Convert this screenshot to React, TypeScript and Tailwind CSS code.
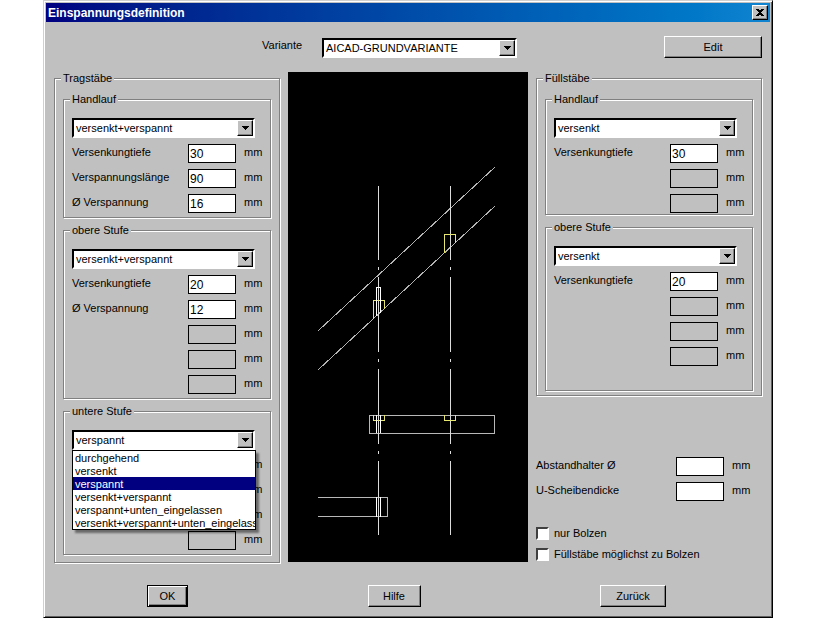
import { useId, useState, type ReactNode } from "react";
import clsx from "clsx";

const mountingOptions = [
  "durchgehend",
  "versenkt",
  "verspannt",
  "versenkt+verspannt",
  "verspannt+unten_eingelassen",
  "versenkt+verspannt+unten_eingelassen",
];

type FieldRow = {
  label?: string;
  value?: string;
};

function Group({ title, className, children }: { title: string; className?: string; children: ReactNode }) {
  return (
    <fieldset
      className={clsx(
        "min-w-0 border border-[#808080] shadow-[1px_1px_0_#fff,inset_1px_1px_0_#fff]",
        className,
      )}
    >
      <legend className="-ml-0.5 bg-[#c0c0c0] px-0.5 leading-[13px]">{title}</legend>
      {children}
    </fieldset>
  );
}

function ComboBox({
  id,
  label,
  value,
  options,
  onChange,
}: {
  id?: string;
  label?: string;
  value: string;
  options: string[];
  onChange: (value: string) => void;
}) {
  return (
    <div className="relative h-5 border-2 border-t-black border-l-black border-r-white border-b-white bg-white">
      <select
        id={id}
        aria-label={label}
        value={value}
        onChange={(event) => onChange(event.target.value)}
        className="block h-4 w-full appearance-none bg-white pl-0.5 pr-4 leading-4 outline-none"
      >
        {options.map((option) => (
          <option key={option}>{option}</option>
        ))}
      </select>
      <span className="pointer-events-none absolute top-0 right-0 flex h-4 w-4 items-center justify-center border border-t-white border-l-white border-r-black border-b-black bg-[#c0c0c0] shadow-[inset_-1px_-1px_0_#808080]">
        <svg width="7" height="4" viewBox="0 0 7 4" shapeRendering="crispEdges" aria-hidden="true">
          <path d="M0 0h7v1H6v1H5v1H4v1H3V3H2V2H1V1H0z" fill="#000" />
        </svg>
      </span>
    </div>
  );
}

function MeasureRow({ label, value, disabled }: FieldRow & { disabled?: boolean }) {
  const id = useId();

  return (
    <div className="flex h-[19px] items-start">
      <label htmlFor={id} className="min-w-0 flex-1 leading-[17px] whitespace-nowrap">
        {label}
      </label>
      <input
        id={id}
        type="text"
        defaultValue={value}
        disabled={disabled}
        aria-label={label ? undefined : "mm"}
        className="h-[19px] w-12 border border-black bg-white px-px text-xs outline-none disabled:bg-[#c0c0c0]"
      />
      <span className="ml-2 w-[18px] leading-[17px]">mm</span>
    </div>
  );
}

function MountingGroup({
  title,
  initial,
  rows,
  open,
  className,
}: {
  title: string;
  initial: string;
  rows: FieldRow[];
  open?: boolean;
  className?: string;
}) {
  const [value, setValue] = useState(initial);
  const [listOpen, setListOpen] = useState(Boolean(open));

  const choose = (option: string) => {
    setValue(option);
    setListOpen(false);
  };

  return (
    <Group title={title} className={clsx("px-2", className)}>
      <div className="flex flex-col gap-1.5 pt-3">
        <div className="relative mr-[7px]">
          <ComboBox label={title} value={value} options={mountingOptions} onChange={choose} />
          {listOpen && (
            <ul
              role="listbox"
              aria-label={title}
              className="absolute top-5 -right-px left-0 z-10 overflow-hidden border border-black bg-white shadow-[3px_3px_2px_rgba(0,0,0,0.45)]"
            >
              {mountingOptions.map((option) => (
                <li
                  key={option}
                  role="option"
                  aria-selected={option === value}
                  onClick={() => choose(option)}
                  className={clsx(
                    "h-[13px] pl-0.5 leading-[14px] whitespace-nowrap",
                    option === value && "bg-[#000080] text-white",
                  )}
                >
                  {option}
                </li>
              ))}
            </ul>
          )}
        </div>
        {rows.map((row, index) => (
          <MeasureRow key={index} {...row} disabled={!row.label} />
        ))}
      </div>
    </Group>
  );
}

function DialogButton({
  isDefault,
  className,
  children,
}: {
  isDefault?: boolean;
  className?: string;
  children: ReactNode;
}) {
  return (
    <button
      type={isDefault ? "submit" : "button"}
      className={clsx(
        "h-[22px] border bg-[#c0c0c0] text-center",
        isDefault
          ? "border-black shadow-[inset_1px_1px_0_#fff,inset_-1px_-1px_0_#000,inset_-2px_-2px_0_#808080]"
          : "border-t-white border-l-white border-r-black border-b-black shadow-[inset_-1px_-1px_0_#808080]",
        className,
      )}
    >
      {children}
    </button>
  );
}

function CheckOption({ label }: { label: string }) {
  return (
    <label className="flex items-center gap-[5px] leading-[13px]">
      <input
        type="checkbox"
        className="h-[13px] w-[13px] appearance-none border-2 border-t-[#404040] border-l-[#404040] border-r-white border-b-white bg-white checked:bg-[#000080]"
      />
      {label}
    </label>
  );
}

function SectionDrawing() {
  return (
    <svg
      viewBox="288 72 240 490"
      className="h-full w-full"
      fill="none"
      shapeRendering="crispEdges"
      role="img"
      aria-label="Einspannung"
    >
      {/* handrail */}
      <path d="M318 331L495 167M318 370L495 206" stroke="#b4b4b4" />
      {/* steps */}
      <path d="M369.5 415.5H494.5V433.5H369.5zM318 497.5H387.5V516.5H318" stroke="#b8b8b8" />
      {/* bar axes */}
      <path
        d="M378.5 186V260M378.5 267V270M378.5 277V352M378.5 359V362M378.5 369V444M378.5 451V454M378.5 461V535M450.5 186V260M450.5 267V270M450.5 277V352M450.5 359V362M450.5 369V444M450.5 451V454M450.5 461V535"
        stroke="#dcdcdc"
      />
      {/* recesses */}
      <path
        d="M373.5 319V300.5H384.5V309M444.5 253V234.5H455.5V243M373.5 415V420.5H384.5V415M444.5 415V420.5H455.5V415"
        stroke="#e6e66e"
      />
      {/* bolts */}
      <path
        d="M376.5 316V287.5H380.5V313M376.5 415V433M380.5 415V433M376.5 497V517M380.5 497V517"
        stroke="#fff"
      />
    </svg>
  );
}

export default function App() {
  const [variant, setVariant] = useState("AICAD-GRUNDVARIANTE");

  return (
    <main className="min-h-screen bg-white pr-[47px] pl-[43px] font-['Liberation_Sans',Arial,sans-serif] text-[11px] text-black">
      <section
        aria-labelledby="dialog-title"
        className="min-w-[720px] border border-t-[#d0d0d0] border-l-[#d0d0d0] border-r-black border-b-black bg-[#c0c0c0] px-px pt-0.5 pb-px shadow-[inset_1px_1px_0_#fff,inset_-1px_-1px_0_#606060]"
      >
        <header className="mx-px flex h-[19px] items-center justify-between bg-linear-to-r from-[#000080] to-[#1084d0] px-0.5">
          <h1 id="dialog-title" className="text-xs font-bold text-white">
            Einspannungsdefinition
          </h1>
          <button
            type="button"
            aria-label="Schließen"
            className="flex h-[15px] w-4 items-center justify-center border border-t-white border-l-white border-r-black border-b-black bg-[#c0c0c0] shadow-[inset_-1px_-1px_0_#808080]"
          >
            <svg width="8" height="7" viewBox="0 0 8 7" shapeRendering="crispEdges" aria-hidden="true">
              <path
                d="M0 0h3v1h2V0h3v1H7v1H6v1H5v1h1v1h1v1h1v1H5V6H3v1H0V6h1V5h1V4h1V3H2V2H1V1H0z"
                fill="#000"
              />
            </svg>
          </button>
        </header>

        <div className="pt-3.5 pr-[9px] pb-[9px] pl-[9px]">
          <div className="flex h-[22px] items-start pl-[208px]">
            <label htmlFor="variant" className="w-[60px] leading-[18px]">
              Variante
            </label>
            <div className="mt-0.5 w-[195px]">
              <ComboBox id="variant" value={variant} options={["AICAD-GRUNDVARIANTE"]} onChange={setVariant} />
            </div>
            <DialogButton className="ml-auto w-[98px]">Edit</DialogButton>
          </div>

          <div className="mt-3.5 grid grid-cols-[226fr_240fr_226fr] gap-2">
            <Group title="Tragstäbe" className="px-2 pb-[7px]">
              <div className="flex flex-col gap-1.5 pt-2">
                <MountingGroup
                  title="Handlauf"
                  initial="versenkt+verspannt"
                  className="pb-1"
                  rows={[
                    { label: "Versenkungtiefe", value: "30" },
                    { label: "Verspannungslänge", value: "90" },
                    { label: "Ø Verspannung", value: "16" },
                  ]}
                />
                <MountingGroup
                  title="obere Stufe"
                  initial="versenkt+verspannt"
                  className="pb-1"
                  rows={[
                    { label: "Versenkungtiefe", value: "20" },
                    { label: "Ø Verspannung", value: "12" },
                    {},
                    {},
                    {},
                  ]}
                />
                <MountingGroup title="untere Stufe" initial="verspannt" className="pb-1" open rows={[{}, {}, {}, {}]} />
              </div>
            </Group>

            <div className="mb-px bg-black">
              <SectionDrawing />
            </div>

            <div className="flex flex-col justify-between">
              <Group title="Füllstäbe" className="px-2 pb-1">
                <div className="flex flex-col gap-1.5 pt-2">
                  <MountingGroup
                    title="Handlauf"
                    initial="versenkt"
                    className="pb-px"
                    rows={[{ label: "Versenkungtiefe", value: "30" }, {}, {}]}
                  />
                  <MountingGroup
                    title="obere Stufe"
                    initial="versenkt"
                    className="pb-6"
                    rows={[{ label: "Versenkungtiefe", value: "20" }, {}, {}, {}]}
                  />
                </div>
              </Group>

              <div>
                <div className="mr-3 flex flex-col gap-1.5">
                  <MeasureRow label="Abstandhalter Ø" />
                  <MeasureRow label="U-Scheibendicke" />
                </div>
                <div className="mt-[26px] flex flex-col gap-2 pb-0.5">
                  <CheckOption label="nur Bolzen" />
                  <CheckOption label="Füllstäbe möglichst zu Bolzen" />
                </div>
              </div>
            </div>
          </div>

          <footer className="mt-[22px] flex justify-between pr-24 pl-[93px]">
            <DialogButton isDefault className="w-[41px]">
              OK
            </DialogButton>
            <DialogButton className="w-[53px]">Hilfe</DialogButton>
            <DialogButton className="w-[66px]">Zurück</DialogButton>
          </footer>
        </div>
      </section>
    </main>
  );
}
